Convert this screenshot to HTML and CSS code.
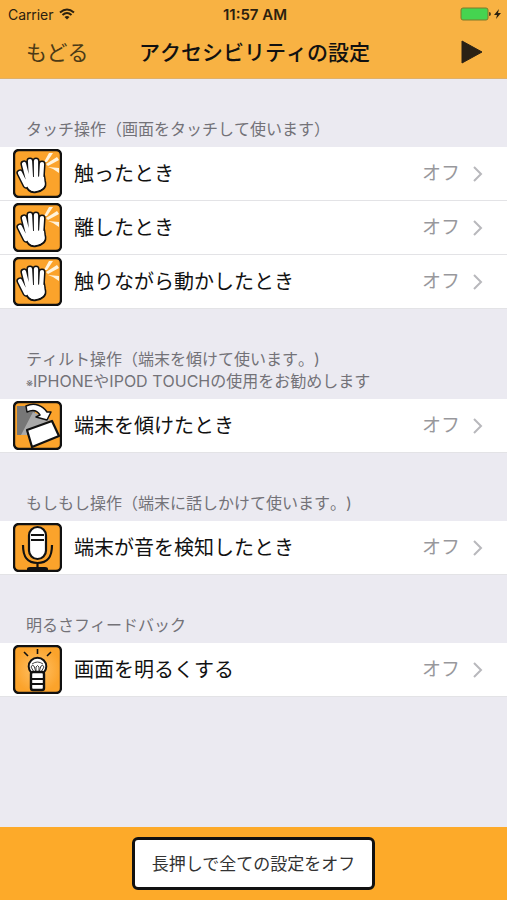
FILE: index.html
```
<!DOCTYPE html>
<html lang="ja">
	<head>
		<meta charset="UTF-8">
		<meta name="viewport" content="width=device-width, initial-scale=1">
		<title>アクセシビリティの設定</title>
		<link rel="stylesheet" href="styles.css">
	</head>
	<body>
		<!-- アイコン定義 -->
		<svg class="defs" width="0" height="0" aria-hidden="true">
			<defs>
				<radialGradient id="glow"><stop offset="0" stop-color="#ffc36a"/><stop offset="1" stop-color="#fba32b"/></radialGradient>
				<symbol id="icon-touch" viewBox="0 0 49 49">
					<rect x="1" y="1" width="47" height="47" rx="5" fill="#fba32b" stroke="#111" stroke-width="2.4"/>
					<path d="M31 13L36 4L40 4L34 13Z M33 15L44 8L46 11L35 17Z M35 18L46 19L46 24L40 20Z" fill="#fff3dc"/>
					<g stroke-linecap="round" stroke-linejoin="round">
						<path d="M7 24L13 36M11 15L15 31M17 12L18 29M23 12L23 29M29 15L28 31" fill="none" stroke="#111" stroke-width="7.2"/>
						<path d="M11 32C14 41 17 44 23 43C29 42 34 39 32 32L31 26L13 28Z" fill="#fff" stroke="#111" stroke-width="2"/>
						<path d="M7 24L13 36M11 15L15 31M17 12L18 29M23 12L23 29M29 15L28 31" fill="none" stroke="#fff" stroke-width="4.2"/>
						<path d="M12 31L15 28H31L31.500 33C33 38 28 41 23 42C18 43 15 40 12 31Z" fill="#fff"/>
					</g>
				</symbol>
				<symbol id="icon-tilt" viewBox="0 0 49 49">
					<rect x="1" y="1" width="47" height="47" rx="5" fill="#fba32b" stroke="#111" stroke-width="2.4"/>
					<path d="M4 5H22V34H4Z" fill="#777"/>
					<path d="M8 34L20 11L38 19L14 31V34Z" fill="#aaa"/>
					<path d="M14 29L39 20L46 35L19 46Z" fill="#fff" stroke="#111" stroke-width="2.2" stroke-linejoin="round"/>
					<path d="M13 5C22 1 30 5 34 11L38 11L34 19L23 16L27 14C24 9 20 8 14 11Z" fill="#fff" stroke="#111" stroke-width="1.5" stroke-linejoin="round"/>
				</symbol>
				<symbol id="icon-mic" viewBox="0 0 49 49">
					<rect x="1" y="1" width="47" height="47" rx="5" fill="#fba32b" stroke="#111" stroke-width="2.4"/>
					<rect x="16" y="4" width="17" height="32" rx="8.5" fill="#fff" stroke="#111" stroke-width="2.2"/>
					<path d="M18 12H31M18 17H31" stroke="#111" stroke-width="2"/>
					<path d="M10 22C10 34 14 40 24.5 40S39 34 39 22M24.5 40V46" fill="none" stroke="#111" stroke-width="2.2"/>
					<path d="M14 48V46Q14 44 17 44H32Q35 44 35 46V48Z" fill="#111"/>
				</symbol>
				<symbol id="icon-light" viewBox="0 0 49 49">
					<rect x="1" y="1" width="47" height="47" rx="5" fill="url(#glow)" stroke="#111" stroke-width="2.4"/>
					<path d="M11 7L15 11M24.5 4V9M38 7L34 11" stroke="#111" stroke-width="1.6"/>
					<circle cx="24.5" cy="21.5" r="8.8" fill="#fff" stroke="#111" stroke-width="2"/>
					<path d="M21 27L18 22Q19 19 21 21L23 27L23 22Q24.5 19 26 22L26 27L28 21Q30 19 31 22L28 27M19 19Q24.5 15 30 19" fill="none" stroke="#444" stroke-width="1"/>
					<rect x="18" y="27" width="13" height="18" rx="2" fill="#fff" stroke="#111" stroke-width="2.4"/>
					<path d="M18 34H31M18 39H31" stroke="#111" stroke-width="2"/>
				</symbol>
				<symbol id="icon-arrow" viewBox="0 0 10 16">
					<path d="M1 1L8 8L1 15" fill="none" stroke="#b8b8bc" stroke-width="2"/>
				</symbol>
			</defs>
		</svg>
		<div class="app">
			<header class="header">
				<div class="status">
					<div class="status-carrier">
						<span>Carrier</span>
						<svg width="16" height="12" viewBox="0 0 16 12" fill="none" stroke="#2b210f" stroke-width="2"><path d="M1 4.5Q8 -1.5 15 4.5M3.5 7Q8 3 12.5 7"/><path d="M8 11.5L5.5 9Q8 7 10.5 9Z" fill="#2b210f" stroke="none"/></svg>
					</div>
					<div class="status-time">11:57 AM</div>
					<div class="status-battery">
						<svg width="42" height="14" viewBox="0 0 42 14"><rect x="1" y="1" width="27" height="12" rx="2" fill="#45d450" stroke="#7d7a2b"/><path d="M29 5Q31 5 31 7T29 9Z" fill="#55451f"/><path d="M39 2L34 8H37L36 12L41 6H38Z" fill="#2b210f"/></svg>
					</div>
				</div>
				<nav class="nav">
					<button type="button" class="nav-back">もどる</button>
					<h1 class="nav-title">アクセシビリティの設定</h1>
					<button type="button" class="nav-play" aria-label="再生">
						<svg width="22" height="24" viewBox="0 0 22 24"><path d="M1 1L21 12L1 23Z" fill="#2a2115" stroke="#2a2115" stroke-linejoin="round"/></svg>
					</button>
				</nav>
			</header>
			<main class="main">
				<section>
					<h2 class="group-title">タッチ操作（画面をタッチして使います）</h2>
					<div class="group">
						<a class="row" href="#"><svg class="row-icon"><use href="#icon-touch"/></svg><span class="row-label">触ったとき</span><span class="row-value">オフ</span><svg class="row-arrow"><use href="#icon-arrow"/></svg></a>
						<a class="row" href="#"><svg class="row-icon"><use href="#icon-touch"/></svg><span class="row-label">離したとき</span><span class="row-value">オフ</span><svg class="row-arrow"><use href="#icon-arrow"/></svg></a>
						<a class="row" href="#"><svg class="row-icon"><use href="#icon-touch"/></svg><span class="row-label">触りながら動かしたとき</span><span class="row-value">オフ</span><svg class="row-arrow"><use href="#icon-arrow"/></svg></a>
					</div>
				</section>
				<section>
					<h2 class="group-title">ティルト操作（端末を傾けて使います。)<br><span class="group-mark">※</span>IPHONEやIPOD TOUCHの使用をお勧めします</h2>
					<div class="group">
						<a class="row" href="#"><svg class="row-icon"><use href="#icon-tilt"/></svg><span class="row-label">端末を傾けたとき</span><span class="row-value">オフ</span><svg class="row-arrow"><use href="#icon-arrow"/></svg></a>
					</div>
				</section>
				<section>
					<h2 class="group-title">もしもし操作（端末に話しかけて使います。)</h2>
					<div class="group">
						<a class="row" href="#"><svg class="row-icon"><use href="#icon-mic"/></svg><span class="row-label">端末が音を検知したとき</span><span class="row-value">オフ</span><svg class="row-arrow"><use href="#icon-arrow"/></svg></a>
					</div>
				</section>
				<section>
					<h2 class="group-title">明るさフィードバック</h2>
					<div class="group">
						<a class="row" href="#"><svg class="row-icon"><use href="#icon-light"/></svg><span class="row-label">画面を明るくする</span><span class="row-value">オフ</span><svg class="row-arrow"><use href="#icon-arrow"/></svg></a>
					</div>
				</section>
			</main>
			<footer class="footer">
				<button type="button" class="footer-reset">長押しで全ての設定をオフ</button>
			</footer>
		</div>
	</body>
</html>
```
FILE: styles.css
```
*{box-sizing: border-box;}
body{margin: 0; font-family: Inter, "Noto Sans CJK JP", sans-serif; font-kerning: none; color: #111; text-spacing-trim: space-all;}
button{margin: 0; padding: 0; border: none; background: none; font-family: inherit; color: inherit;}
svg{display: block; flex: none;}
.defs{position: absolute;}
.app{display: flex; flex-direction: column; min-height: 100vh; background: #ebeaf1;}

.header{background: #f8b243; border-bottom: 1px solid #dfb06a;}
.status{display: grid; grid-template-columns: 1fr auto 1fr; align-items: center; height: 28px; padding: 0 5px 0 8px; font-size: 14px; color: #2b210f;}
.status-carrier{display: flex; align-items: center; gap: 6px;}
.status-time{font-weight: 600; font-size: 15px;}
.status-battery{justify-self: end;}
.nav{display: grid; grid-template-columns: 1fr auto 1fr; align-items: center; height: 50px; padding: 0 24px 0 26px;}
.nav-back{justify-self: start; font-size: 21px; line-height: 28px; color: #4c3a16;}
.nav-title{margin: 0; font-size: 21px; font-weight: 500; line-height: 28px;}
.nav-play{justify-self: end; padding-bottom: 2px;}

.main{flex: 1;}
.group-title{margin: 0; padding: 39px 26px 7px; font-size: 16px; font-weight: 400; line-height: 22px; color: #737278;}
.group-mark{font-size: 11px; line-height: 1;}
.group{background: #fff;}
.row{display: flex; align-items: center; height: 54px; padding: 0 24px 0 13px; border-bottom: 1px solid #e3e3e6; color: inherit; font-size: 20px; line-height: 28px; text-decoration: none;}
.row-icon{width: 49px; height: 49px;}
.row-label{flex: 1; margin-left: 12px;}
.row-value{font-size: 19px; color: #98989c;}
.row-arrow{width: 10px; height: 16px; margin-left: 13px;}

.footer{display: flex; justify-content: center; padding: 10px; background: #fdaa29;}
.footer-reset{padding: 13px 17px 11px; border: 3px solid #111; border-radius: 6px; background: #fff; font-size: 17px; line-height: 23px; color: #333;}
```
